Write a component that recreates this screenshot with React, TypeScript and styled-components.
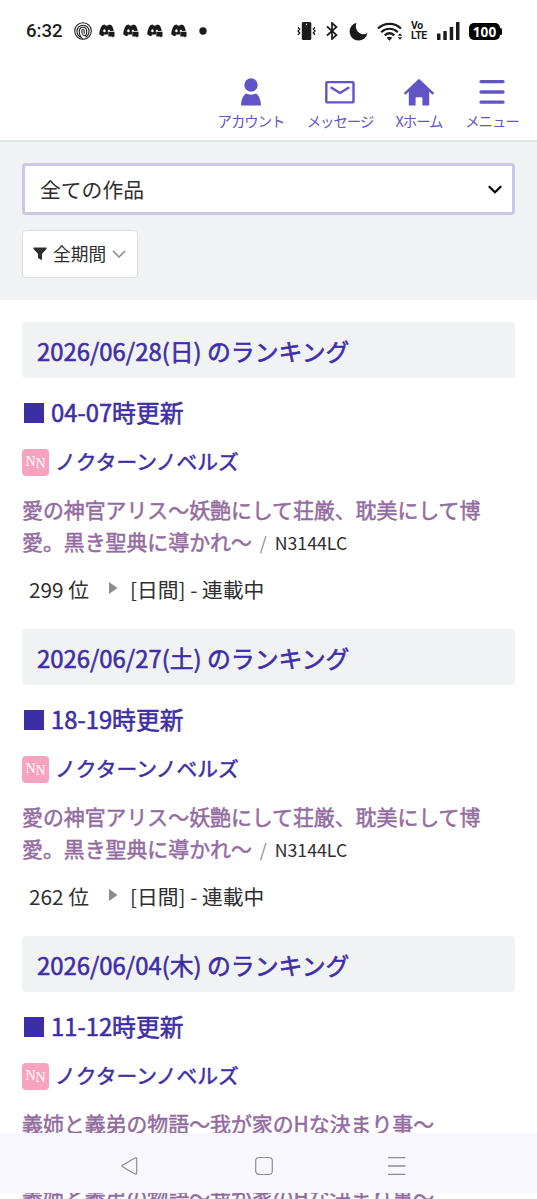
import React from "react";
import styled, { createGlobalStyle } from "styled-components";

const Global = createGlobalStyle`
  * { box-sizing: border-box; }
  html, body { margin: 0; padding: 0; background: #fff; }
  body { font-family: "Noto Sans CJK JP", "Noto Sans", sans-serif; color: #2e2e2e; overflow: hidden; }
`;

const Screen = styled.div`
  width: 537px;
  height: 1199px;
  display: flex;
  flex-direction: column;
  overflow: hidden;
  background: #fff;
`;

const StatusBar = styled.header`
  height: 62px;
  flex: none;
  display: flex;
  justify-content: space-between;
  padding: 0 37px 0 26px;
  color: #1b1b1b;
`;

const StatusGroup = styled.div`
  display: flex;
  align-items: center;
  height: 62px;
`;

const Clock = styled.span`
  font: 500 18.6px/22px Roboto, sans-serif;
  width: 48px;
`;

const Icon = styled.svg<{ $w: number; $h: number; $ml?: number }>`
  display: block;
  flex: none;
  width: ${(p) => p.$w}px;
  height: ${(p) => p.$h}px;
  margin-left: ${(p) => p.$ml ?? 0}px;
`;

const Volte = styled.div`
  width: 17px;
  margin-left: 8px;
  display: flex;
  flex-direction: column;
  font: 700 10.4px/10px Roboto, sans-serif;
  letter-spacing: -0.3px;
`;

const Battery = styled.div`
  width: 31px;
  height: 17px;
  margin-left: 9px;
  border-radius: 5px;
  background: #000;
  color: #fff;
  text-align: center;
  font: 700 13.6px/17px "Noto Sans", sans-serif;
  letter-spacing: 0;
  position: relative;
  &::after {
    content: "";
    position: absolute;
    right: -2px;
    top: 5px;
    width: 3px;
    height: 7px;
    border-radius: 2px;
    background: #000;
  }
`;

const TopNav = styled.nav`
  height: 80px;
  flex: none;
  display: flex;
  justify-content: flex-end;
  padding: 15px 18px 0 0;
  border-bottom: 2px solid #e2e5e5;
`;

const NavItem = styled.a<{ $w: number; $ml?: number }>`
  width: ${(p) => p.$w}px;
  margin-left: ${(p) => p.$ml ?? 0}px;
  display: flex;
  flex-direction: column;
  align-items: center;
  color: #6155c6;
  font-size: 14.4px;
  letter-spacing: -1px;
  line-height: 20px;
  font-weight: 400;
  white-space: nowrap;
`;

const NavLabel = styled.span`
  margin-top: 4px;
`;

const Filters = styled.section`
  height: 158px;
  flex: none;
  background: #f1f2f4;
  padding: 21px 22px 0;
`;

const SelectBox = styled.div`
  height: 52px;
  border: 3px solid #cbc7e6;
  border-radius: 4px;
  background: #fff;
  display: flex;
  align-items: center;
  justify-content: space-between;
  padding: 0 10px 0 15px;
  font-size: 20.8px;
`;

const PeriodButton = styled.div`
  width: 116px;
  height: 48px;
  margin-top: 15px;
  border: 1px solid #dfe0e2;
  border-radius: 4px;
  background: #fff;
  display: flex;
  align-items: center;
  padding-left: 10px;
  font-size: 17.7px;
`;

const PeriodLabel = styled.span`
  margin: -2px 6px 0;
`;

const List = styled.main`
  flex: 1;
  min-height: 0;
  overflow: hidden;
  padding: 22px 22px 0;
`;

const Entry = styled.article`
  height: 307px;
`;

const DateHeading = styled.h2`
  margin: 0;
  height: 56px;
  padding-left: 15px;
  border-radius: 4px;
  background: #f1f2f4;
  color: #3d2ea6;
  font-weight: 400;
  font-size: 23.87px;
  line-height: 57px;
  -webkit-text-stroke: 0.55px currentColor;
  white-space: nowrap;
`;

const UpdateHeading = styled.h3`
  margin: 16px 0 0;
  height: 36px;
  display: flex;
  align-items: center;
  color: #3d2ea6;
  font-weight: 400;
  font-size: 23.8px;
  line-height: 36px;
  -webkit-text-stroke: 0.55px currentColor;
`;

const Square = styled.span`
  width: 20px;
  height: 20px;
  margin: 1px 7px 0 2px;
  background: #3d2ea6;
`;

const Site = styled.div`
  margin-top: 13px;
  height: 36px;
  display: flex;
  align-items: center;
  color: #3d2ea6;
  font-size: 20.75px;
  line-height: 36px;
  -webkit-text-stroke: 0.5px currentColor;
`;

const SiteBadge = styled.span`
  width: 27px;
  height: 27px;
  margin: 2px 6px 0 0;
  border-radius: 4px;
  background: #f7a3c0;
  color: #fff;
  display: flex;
  justify-content: center;
  align-items: flex-start;
  padding-top: 6px;
  font: 14px/14px "Liberation Serif", serif;
  -webkit-text-stroke: 0;
`;

const BadgeLetter = styled.span<{ $drop?: boolean }>`
  padding-top: ${(p) => (p.$drop ? 2 : 0)}px;
`;

const Title = styled.p`
  margin: 14px 0 0;
  height: 64px;
  font-size: 20.9px;
  line-height: 32px;
  color: #936c9f;
  white-space: nowrap;
`;

const TitleText = styled.span`
  -webkit-text-stroke: 0.5px currentColor;
`;

const Code = styled.span`
  margin-left: 8px;
  font-size: 17.7px;
  color: #2e2e2e;
`;

const Slash = styled.span`
  margin-right: 8px;
  color: #8c8c8c;
`;

const Rank = styled.div`
  margin-top: 15px;
  height: 34px;
  padding-left: 7px;
  display: flex;
  align-items: center;
  font-size: 20.75px;
  line-height: 34px;
  white-space: nowrap;
`;

const RankNumber = styled.span`
  width: 80px;
`;

const RankDetail = styled.span`
  margin-left: 12px;
`;

const SystemNav = styled.footer`
  height: 60px;
  flex: none;
  background: #f8f7fe;
  display: flex;
  align-items: center;
  padding: 6px 0 0 121px;
`;

const Remainder = styled.div`
  height: 6px;
  flex: none;
  overflow: hidden;
  display: flex;
  align-items: center;
  padding-left: 22px;
  font-size: 20.9px;
  line-height: 32px;
  color: #936c9f;
  white-space: nowrap;
`;

const entries = [
  { date: "2026/06/28(日)", time: "04-07", title: ["愛の神官アリス〜妖艶にして荘厳、耽美にして博", "愛。黒き聖典に導かれ〜"], code: "N3144LC", rank: "299" },
  { date: "2026/06/27(土)", time: "18-19", title: ["愛の神官アリス〜妖艶にして荘厳、耽美にして博", "愛。黒き聖典に導かれ〜"], code: "N3144LC", rank: "262" },
  { date: "2026/06/04(木)", time: "11-12", title: ["義姉と義弟の物語〜我が家のHな決まり事〜"] },
];

const ControllerIcon = ({ ml }: { ml: number }) => (
  <Icon $w={16} $h={14} $ml={ml} viewBox="0 0 16 14">
    <path d="M3.2 1.2 5.6.5l.9 1h2.600l.9-1 2.500.8c1.300 1.800 2 3.700 2.200 5.700H9v3.600H5.500l-1.600 1.700C2.500 12 1.300 11.400.3 10.500.2 7.200 1.200 3.800 3.200 1.200Z" fill="#1b1b1b" />
    <ellipse cx="5.400" cy="6.800" rx="1.200" ry="1.500" fill="#fff" />
    <path d="M8.800 8V6.300c.6-1 2.100-.8 2.300.7" fill="#fff" />
    <path d="M9.300 7.700h6.200v4.900h-1.200v1.200l-1.600-1.200H9.300Z" fill="#1b1b1b" />
  </Icon>
);

export default function App() {
  return (
    <>
      <Global />
      <Screen>
        <StatusBar>
          <StatusGroup>
            <Clock>6:32</Clock>
            <Icon $w={18} $h={18} viewBox="0 0 18 18" fill="none" stroke="#1b1b1b" strokeWidth="1.100">
              <circle cx="9" cy="9" r="8.300" />
              <path d="M6.500 15.200C3.800 13.600 3 11.500 3 9.200a6 6 0 0 1 12 0c0 2.300-.9 4.500-3.500 6" />
              <path d="M8.700 17c-2-1.800-3.400-4.700-3.400-7.600C5.300 7 6.900 5.200 9 5.200s3.700 1.800 3.700 4.200c0 2.100-1 4.200-2.300 4.200-1.700 0-2.600-2.600-2.600-4.400 0-1 .5-1.700 1.200-1.700s1.200.8 1.200 1.800v2.500" />
            </Icon>
            <ControllerIcon ml={7} />
            <ControllerIcon ml={8} />
            <ControllerIcon ml={8} />
            <ControllerIcon ml={8} />
            <Icon $w={8} $h={8} $ml={12} viewBox="0 0 8 8"><circle cx="4" cy="4" r="3.700" fill="#1b1b1b" /></Icon>
          </StatusGroup>
          <StatusGroup>
            <Icon $w={19} $h={18} viewBox="0 0 19 18">
              <rect x="4.800" y="0" width="9.500" height="18" rx="1.500" fill="#1b1b1b" />
              <circle cx="9.500" cy="2.300" r=".7" fill="#fff" />
              <path d="M1 5.500 2.700 7 1 9l1.700 2L1 12.700M18 5.500 16.300 7 18 9l-1.700 2 1.700 1.700" fill="none" stroke="#1b1b1b" strokeWidth="1.300" />
            </Icon>
            <Icon $w={12} $h={18} $ml={10} viewBox="0 0 12 18" fill="none" stroke="#1b1b1b" strokeWidth="1.700">
              <path d="m1 4.500 9.500 8.500L6 17V1l4.500 4L1 13.500" />
            </Icon>
            <Icon $w={19} $h={19} $ml={11} viewBox="0 0 19 19">
              <path d="M7.500.8A9 9 0 1 0 18.500 11C13 15 4.500 9 7.500.8Z" fill="#1b1b1b" />
            </Icon>
            <Icon $w={26} $h={19} $ml={9} viewBox="0 0 26 19" fill="none" stroke="#1b1b1b" strokeWidth="2.200">
              <path d="M1 6.500C7.500.2 17.500.2 24 6.500M4.200 10.200c4.800-4.600 11.800-4.600 16.600 0M7.700 13.400c2.900-2.600 6.700-2.600 9.600 0" />
              <path d="m9.700 15.700 2.800 3 2.800-3c-1.800-1.300-3.800-1.300-5.600 0Z" fill="#1b1b1b" stroke="none" />
              <path d="m20.700 13.800 2.300-2.600 2.300 2.600ZM20.700 15.200 23 17.800l2.300-2.600Z" fill="#1b1b1b" stroke="none" />
            </Icon>
            <Volte><span>Vo</span><span>LTE</span></Volte>
            <Icon $w={23} $h={18} $ml={9} viewBox="0 0 23 18" fill="#1b1b1b">
              <rect x="0" y="11.500" width="3.500" height="6.500" rx=".6" />
              <rect x="6.300" y="9" width="3.500" height="9" rx=".6" />
              <rect x="12.700" y="5" width="3.500" height="13" rx=".6" />
              <rect x="19" y="0" width="3.500" height="18" rx=".6" />
            </Icon>
            <Battery>100</Battery>
          </StatusGroup>
        </StatusBar>

        <TopNav>
          <NavItem $w={68}>
            <Icon $w={30} $h={30} viewBox="0 0 30 30" fill="currentColor">
              <circle cx="15" cy="8" r="6.700" />
              <path d="M5 28.500c.2-5.500 1.500-9.500 5-12 3.200 1.500 6.800 1.500 10 0 3.500 2.500 4.800 6.500 5 12Z" />
            </Icon>
            <NavLabel>アカウント</NavLabel>
          </NavItem>
          <NavItem $w={68} $ml={21}>
            <Icon $w={30} $h={30} viewBox="0 0 30 30" fill="none" stroke="currentColor" strokeWidth="2.400" strokeLinejoin="round">
              <rect x="1.300" y="5.100" width="27.200" height="20.300" rx="1" />
              <path d="m6.500 10.800 8.500 5.200 8.500-5.200" strokeLinecap="round" />
            </Icon>
            <NavLabel>メッセージ</NavLabel>
          </NavItem>
          <NavItem $w={50} $ml={20}>
            <Icon $w={32} $h={30} viewBox="0 0 32 30" fill="currentColor">
              <path d="M16 3.300 28 14.500h-1.800v14h-6.800v-7.300c0-.7-.3-1-1-1h-4.800c-.7 0-1 .3-1 1v7.300H5.800v-14H4Z" />
              <path d="M2.200 16.300 16 3.300l13.800 13" fill="none" stroke="currentColor" strokeWidth="2.400" strokeLinecap="round" strokeLinejoin="round" />
            </Icon>
            <NavLabel>Xホーム</NavLabel>
          </NavItem>
          <NavItem $w={54} $ml={21}>
            <Icon $w={30} $h={30} viewBox="0 0 30 30" stroke="currentColor" strokeWidth="3.300" strokeLinecap="round">
              <path d="M4 4.700h22M4 15h22M4 25.200h22" />
            </Icon>
            <NavLabel>メニュー</NavLabel>
          </NavItem>
        </TopNav>

        <Filters>
          <SelectBox>
            全ての作品
            <Icon $w={14} $h={9} viewBox="0 0 14 9" fill="none" stroke="#000" strokeWidth="2.100">
              <path d="m.8 1.200 6.200 6 6.200-6" />
            </Icon>
          </SelectBox>
          <PeriodButton>
            <Icon $w={14} $h={14} viewBox="0 0 14 14" fill="#2e2e2e">
              <path d="M.5.500h13v1.600L9 6.800v6.400L5 11V6.800L.5 2.100Z" />
            </Icon>
            <PeriodLabel>全期間</PeriodLabel>
            <Icon $w={14} $h={9} viewBox="0 0 14 9" fill="none" stroke="#888" strokeWidth="1.500">
              <path d="m1 1 6 6 6-6" />
            </Icon>
          </PeriodButton>
        </Filters>

        <List>
          {entries.map((e) => (
            <Entry key={e.date}>
              <DateHeading>{e.date} のランキング</DateHeading>
              <UpdateHeading><Square />{e.time}時更新</UpdateHeading>
              <Site>
                <SiteBadge><BadgeLetter>N</BadgeLetter><BadgeLetter $drop>N</BadgeLetter></SiteBadge>
                ノクターンノベルズ
              </Site>
              <Title>
                <TitleText>{e.title[0]}</TitleText>
                {e.title[1] && <><br /><TitleText>{e.title[1]}</TitleText></>}
                {e.code && <Code><Slash>/</Slash>{e.code}</Code>}
              </Title>
              {e.rank && (
                <Rank>
                  <RankNumber>{e.rank} 位</RankNumber>
                  <Icon $w={9} $h={16} viewBox="0 0 9 16"><path d="M0 1v12l8.500-6Z" fill="#8c8c8c" /></Icon>
                  <RankDetail>[日間] - 連載中</RankDetail>
                </Rank>
              )}
            </Entry>
          ))}
        </List>

        <SystemNav>
          <Icon $w={18} $h={20} viewBox="0 0 18 20" fill="none" stroke="#8c8c92" strokeWidth="1.200" strokeLinejoin="round">
            <path d="M1.500 9.200 14 2c1-.5 1.700-.1 1.700.9v14.200c0 1-.7 1.400-1.700.9L1.500 10.800c-.8-.5-.8-1.100 0-1.600Z" />
          </Icon>
          <Icon $w={20} $h={20} $ml={115} viewBox="0 0 20 20" fill="none" stroke="#8c8c92" strokeWidth="1.200">
            <rect x="1.700" y="1.500" width="16.600" height="17" rx="3.500" />
          </Icon>
          <Icon $w={20} $h={20} $ml={113} viewBox="0 0 20 20" stroke="#8c8c92" strokeWidth="1.300">
            <path d="M1 1.600h17.500M1 10h17.500M1 18.400h17.500" />
          </Icon>
        </SystemNav>
        <Remainder><TitleText>義姉と義弟の物語〜我が家のHな決まり事〜</TitleText></Remainder>
      </Screen>
    </>
  );
}
